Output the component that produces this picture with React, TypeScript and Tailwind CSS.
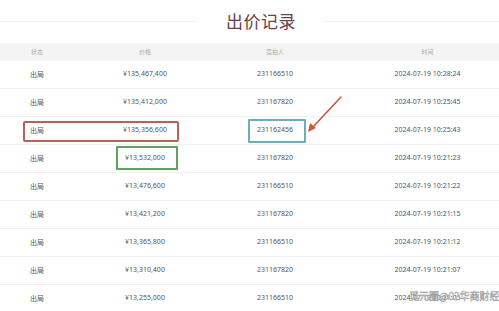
import React from 'react';

const rows = [
  { price: '¥135,467,400', bidder: '231166510', time: '2024-07-19 10:28:24' },
  { price: '¥135,412,000', bidder: '231167820', time: '2024-07-19 10:25:45' },
  { price: '¥135,356,600', bidder: '231162456', time: '2024-07-19 10:25:43' },
  { price: '¥13,532,000', bidder: '231167820', time: '2024-07-19 10:21:23' },
  { price: '¥13,476,600', bidder: '231166510', time: '2024-07-19 10:21:22' },
  { price: '¥13,421,200', bidder: '231167820', time: '2024-07-19 10:21:15' },
  { price: '¥13,365,800', bidder: '231166510', time: '2024-07-19 10:21:12' },
  { price: '¥13,310,400', bidder: '231167820', time: '2024-07-19 10:21:07' },
  { price: '¥13,255,000', bidder: '231166510', time: '2024-07-19 10:21:05' },
];

const cols = 'grid grid-cols-[74px_142px_118px_1fr] items-center';

export default function App() {
  return (
    <div className="relative w-[499px] h-[311px] overflow-hidden bg-white font-['Noto_Sans','Noto_Sans_CJK_SC',sans-serif]">
      {/* Title */}
      <div className="h-[43px] flex items-center">
        <div className="w-[198px] h-px bg-[#f0f0f0]" />
        <h1 className="ml-[28px] mr-[26px] text-[17px] leading-none tracking-[0.5px] text-[#6a4049] font-['Noto_Sans_CJK_SC',sans-serif] -mt-[2px]">
          出价记录
        </h1>
        <div className="flex-1 h-px bg-[#f0f0f0]" />
      </div>

      {/* Header */}
      <div className={`${cols} h-[18px] bg-[#f4f4f4] text-[6px] text-[#aaaaaa] text-center`}>
        <div>状态</div>
        <div>价格</div>
        <div>竞拍人</div>
        <div className="pl-[22px]">时间</div>
      </div>

      {/* Rows */}
      {rows.map((r, i) => (
        <div
          key={i}
          className={`${cols} relative h-[28px] border-b border-[#f1f1f1] text-[7px] text-[#555] text-center`}
        >
          <div className="font-['Noto_Sans_CJK_SC',sans-serif]">出局</div>
          <div>{r.price}</div>
          <div>{r.bidder}</div>
          <div className="pl-[22px]">{r.time}</div>

          {i === 2 && (
            <>
              <div className="absolute left-[23px] top-[4px] w-[156px] h-[21px] border-2 border-[#b8605c] rounded-[2px]" />
              <div className="absolute left-[248px] top-[2px] w-[58px] h-[24px] border-2 border-[#6aaebb] rounded-[1px]" />
            </>
          )}
          {i === 3 && (
            <div className="absolute left-[116px] top-[1px] w-[62px] h-[24px] border-2 border-[#5ea45e] rounded-[1px]" />
          )}
        </div>
      ))}

      {/* Arrow */}
      <svg className="absolute left-0 top-0 pointer-events-none" width="499" height="311">
        <line x1="341" y1="97" x2="312" y2="128" stroke="#c45a3e" strokeWidth="1.6" strokeLinecap="round" />
        <path d="M308 132 L310 123 L316 128 Z" fill="#c45a3e" />
      </svg>

      {/* Watermark */}
      <div className="absolute left-[409px] top-[291px] whitespace-nowrap text-[10px] leading-none text-white [-webkit-text-stroke:0.5px_#9a9a9a] font-['Noto_Sans_CJK_SC',sans-serif]">
        觅元圈@02华商财经
      </div>
    </div>
  );
}
